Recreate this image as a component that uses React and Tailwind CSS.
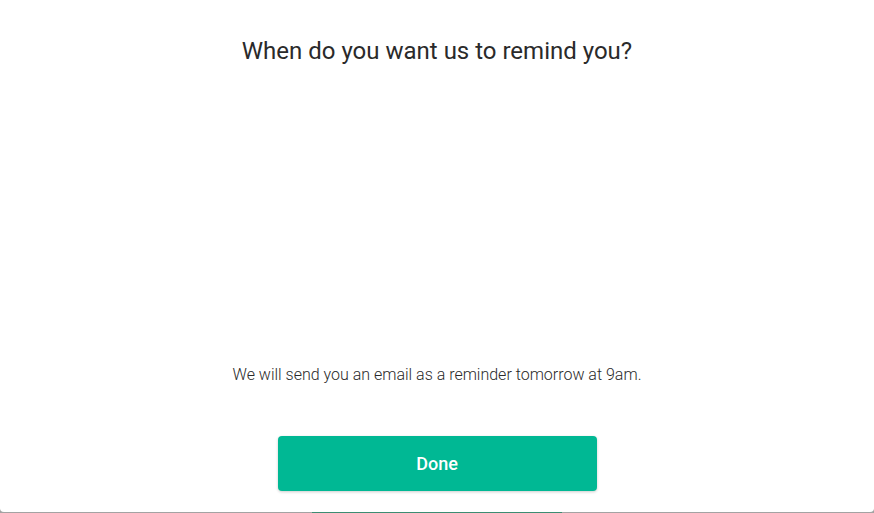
export default function App() {
  return (
    <div className="h-[513px] w-full bg-[#a3a3a3] flex flex-col" style={{ fontFamily: 'Roboto, "Liberation Sans", sans-serif' }}>
      <div className="h-[512px] bg-white rounded-b-[4px] flex flex-col items-center">
        <h1 className="mt-[36px] text-[24px] leading-[30px] text-[#2a2a2a] font-normal">
          When do you want us to remind you?
        </h1>
        <div className="flex-1"></div>
        <p className="text-[16px] leading-[20px] text-[#2a2a2a] font-light">
          We will send you an email as a reminder tomorrow at 9am.
        </p>
        <button className="mt-[51px] mb-[21px] w-[319px] h-[55px] rounded-[4px] bg-[#00b894] text-white text-[18px] font-medium shadow-[0_1px_3px_rgba(0,0,0,0.2)]">
          Done
        </button>
      </div>
      <div className="h-[1px] flex justify-center">
        <div className="w-[250px] h-full bg-[#3d8c72]"></div>
      </div>
    </div>
  )
}
